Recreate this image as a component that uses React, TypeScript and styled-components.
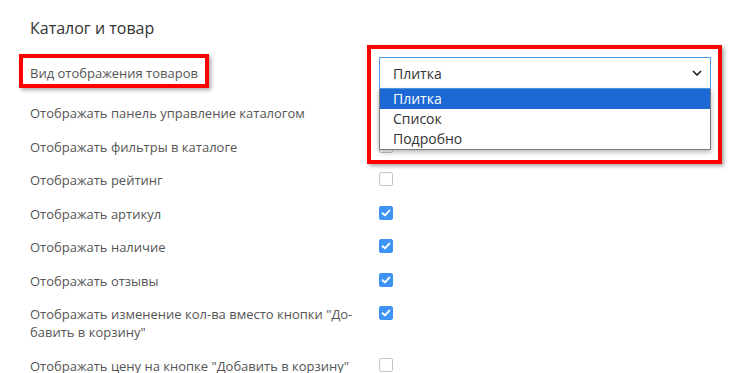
import React from 'react';
import styled, { createGlobalStyle } from 'styled-components';

const GlobalStyle = createGlobalStyle`
  html, body {
    margin: 0;
    padding: 0;
    background: #fff;
  }
  body {
    font-family: 'Open Sans', 'Noto Sans', sans-serif;
  }
`;

const Page = styled.div`
  position: relative;
  width: 740px;
  height: 373px;
  overflow: hidden;
  box-sizing: border-box;
  padding: 17px 0 0 30px;
`;

const Heading = styled.h2`
  margin: 0 0 18px;
  font-size: 16px;
  line-height: 22px;
  font-weight: 400;
  color: #333;
`;

const Row = styled.div<{ $center?: boolean }>`
  display: grid;
  grid-template-columns: 349px 332px;
  align-items: ${(p) => (p.$center ? 'center' : 'start')};
  padding-bottom: ${(p) => (p.$center ? '15px' : '15.5px')};
`;

const Label = styled.div`
  font-size: 13px;
  line-height: 18px;
  color: #555;
`;

const Control = styled.div`
  position: relative;
`;

const Select = styled.div`
  box-sizing: border-box;
  height: 32px;
  border: 1px solid #4f9ce4;
  display: flex;
  align-items: center;
  justify-content: space-between;
  padding: 0 8px 0 13px;
  font-size: 14px;
  color: #333;
  background: #fff;
`;

const OptionList = styled.div`
  position: absolute;
  top: 32px;
  left: 0;
  width: 332px;
  box-sizing: border-box;
  border: 1px solid #7a7a7a;
  border-top: none;
  background: #fff;
  box-shadow: 0 2px 5px rgba(0, 0, 0, 0.3);
  z-index: 2;
`;

const Option = styled.div<{ $selected?: boolean }>`
  height: 20px;
  line-height: 20px;
  padding-left: 13px;
  font-size: 14px;
  color: ${(p) => (p.$selected ? '#fff' : '#333')};
  background: ${(p) => (p.$selected ? '#1c68d4' : 'transparent')};
`;

const Box = styled.span<{ $checked?: boolean }>`
  display: flex;
  align-items: center;
  justify-content: center;
  box-sizing: border-box;
  width: 14px;
  height: 14px;
  margin-top: 1px;
  border-radius: 2px;
  border: 1px solid ${(p) => (p.$checked ? '#3d94f6' : '#c6c6c6')};
  background: ${(p) => (p.$checked ? '#3d94f6' : '#fff')};
`;

const Highlight = styled.div<{ $l: number; $t: number; $w: number; $h: number }>`
  position: absolute;
  left: ${(p) => p.$l}px;
  top: ${(p) => p.$t}px;
  width: ${(p) => p.$w}px;
  height: ${(p) => p.$h}px;
  box-sizing: border-box;
  border: 4px solid #ff0000;
  box-shadow: 2px 2px 4px rgba(0, 0, 0, 0.35);
  pointer-events: none;
  z-index: 3;
`;

function Checkbox({ checked }: { checked?: boolean }) {
  return (
    <Box $checked={checked}>
      {checked && (
        <svg width="10" height="10" viewBox="0 0 10 10">
          <path d="M1.6 5.2 L4 7.4 L8.4 2.6" fill="none" stroke="#fff" strokeWidth="1.9" strokeLinecap="round" strokeLinejoin="round" />
        </svg>
      )}
    </Box>
  );
}

const rows: { label: React.ReactNode; checked: boolean }[] = [
  { label: 'Отображать панель управление каталогом', checked: false },
  { label: 'Отображать фильтры в каталоге', checked: false },
  { label: 'Отображать рейтинг', checked: false },
  { label: 'Отображать артикул', checked: true },
  { label: 'Отображать наличие', checked: true },
  { label: 'Отображать отзывы', checked: true },
  {
    label: (
      <>
        Отображать изменение кол-ва вместо кнопки "До-
        <br />
        бавить в корзину"
      </>
    ),
    checked: true,
  },
  { label: 'Отображать цену на кнопке "Добавить в корзину"', checked: false },
];

export default function App() {
  return (
    <>
      <GlobalStyle />
      <Page>
        <Heading>Каталог и товар</Heading>
        <Row $center>
          <Label>Вид отображения товаров</Label>
          <Control>
            <Select>
              <span>Плитка</span>
              <svg width="10" height="6" viewBox="0 0 10 6">
                <path d="M1 1 L5 5 L9 1" fill="none" stroke="#222" strokeWidth="1.6" />
              </svg>
            </Select>
            <OptionList>
              <Option $selected>Плитка</Option>
              <Option>Список</Option>
              <Option>Подробно</Option>
            </OptionList>
          </Control>
        </Row>
        {rows.map((r, i) => (
          <Row key={i}>
            <Label>{r.label}</Label>
            <Control>
              <Checkbox checked={r.checked} />
            </Control>
          </Row>
        ))}
        <Highlight $l={19} $t={54} $w={190} $h={34} />
        <Highlight $l={367} $t={45} $w={355} $h={119} />
      </Page>
    </>
  );
}
